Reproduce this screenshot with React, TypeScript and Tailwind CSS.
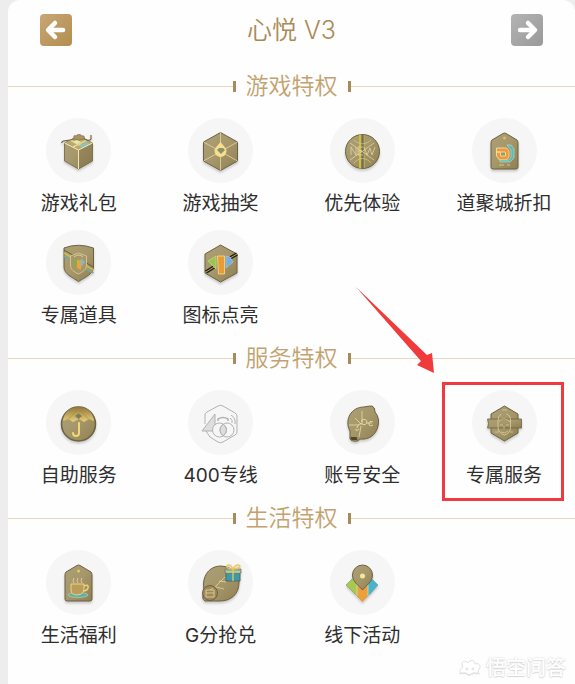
import type { ReactNode } from "react";

type Privilege = { label: string; icon: ReactNode; flat?: boolean; highlighted?: boolean };
type Section = { title: string; items: Privilege[] };

const EDGE = "#6d6140";
const LIGHT = "#f4e6ae";

const HEX = "M32.5 14.5 49.5 24v19L32.5 52.5 15.5 43V24z";

const GiftIcon = (
  <>
    <path d="M32.5 18 46.5 25v18L32.5 51 18.5 43V25z" fill="url(#bronze)" stroke={EDGE} strokeWidth=".8" />
    <path d="M32.5 18 46.5 25 32.5 32 18.5 25z" fill="#b7a877" />
    <path d="M32.5 32 46.5 25v18L32.5 51z" fill="#786a45" opacity=".35" />
    <path d="m24 22 14 7M41 22l-14 7" stroke="#f0d37f" strokeWidth="1.500" fill="none" />
    <path d="m33 28 7-4 4 2-7 4z" fill="#8cc3ba" />
    <path d="m27 24 4-2 4 2-4 2z" fill="#e6e7b5" />
    <path d="M32.5 32v19M18.5 25l14 7 14-7" stroke={LIGHT} fill="none" />
    <path d="M15.500 25c1-4 6-1 12-4M37 20c4 3 7 3 8 1v-4" fill="none" stroke="#75664a" strokeWidth="1.200" />
    <path d="M28 21c-1-4 1-4 2-3 1-2 5-2 6 0 2-1 3 1 2 3l-5 1z" fill="#a9945f" stroke="#75664a" strokeWidth=".6" />
  </>
);

const DrawIcon = (
  <>
    <path d={HEX} fill="url(#bronze)" stroke={EDGE} />
    <path d="M32.500 14.500v38M15.500 24l34 19M49.500 24l-34 19" stroke="#e6d6a4" strokeWidth=".8" />
    <path d="M32.500 23c1 4 6 6 6 10a6 6 0 0 1-12 0c0-4 5-6 6-10z" fill="#f7e08c" />
    <path d="m29 32 2-2h4l2 2-4 4z" fill="#8d9068" />
  </>
);

const EarlyIcon = (
  <>
    <circle cx="32.500" cy="33.500" r="17" fill="url(#bronze)" stroke={EDGE} />
    <path d="M30 16.500v34" stroke="#d3bd31" strokeWidth="2" />
    <path d="M32.500 16.500v34" stroke="#706d62" strokeWidth="2" />
    <path d="M34.500 17v33" stroke="#b9a849" />
    <path d="M21 37v-8l5 8v-8M33 29h-5v8h5M28 33h4M34 29l3 8 3-7 2 7 3-8M20 25l24 17M20 42l24-17" stroke="#eadcae" strokeWidth=".7" fill="none" />
    <path d="M24 22c5 5 12 5 17 0M24 45c5-6 12-6 17 0" stroke="#d8c891" strokeWidth=".7" fill="none" />
  </>
);

const TAG = "M31 15.500q1.500-1 3 0L45 22q1 1 1 3v24q0 2-2 2H21q-2 0-2-2V25q0-2 1-3z";

const DiscountIcon = (
  <>
    <path d={TAG} fill="url(#bronze)" stroke={EDGE} />
    <circle cx="32.500" cy="20" r="1.500" fill="#d9bd68" />
    <path d="M24.500 30h10l2.500 3v6l-2.500 3h-7l-3-4V34h4v4h5v-4h-9z" fill="#ef9a3a" stroke={LIGHT} strokeWidth=".8" />
    <path d="M35 27h4l3 4v9l-4 4H28v-2h9l2-3v-7z" fill="#59b9bd" stroke="#cbe1bf" strokeWidth=".6" />
    <path d="M27 47h5m3 0h3" stroke="#d7c486" />
  </>
);

const ItemsIcon = (
  <>
    <path d="M18 18q14-5.500 29.500 0v19c0 7-8 10-15 14.500C26 47 18 44 18 37z" fill="url(#bronze)" stroke={EDGE} />
    <path d="m18 23 29.500 17" stroke="#d2b844" strokeWidth="2" />
    <path d="m18 26 29.500 17" stroke="#80a69c" strokeWidth="2" />
    <path d="m18 20 29.500 17" stroke="#655f4c" strokeWidth="1" />
    <path d="m32.500 23 8 3v9c0 5-4 7-8 9-4-2-8-4-8-9v-9z" fill="#a99667" stroke="#e0ce95" strokeWidth=".8" />
    <path d="m26 32 5-4v9z" fill="#85ad50" />
    <path d="M31 30h4v10l-4-2z" fill="#e7a344" />
    <path d="m35 28 4 4-4 5z" fill="#83b8cf" />
    <path d="M28 27q5-4 9 0" stroke={LIGHT} fill="none" strokeWidth=".7" />
  </>
);

const LightUpIcon = (
  <>
    <path d="M32.500 15 49 24v19l-16.500 9L17 43V24z" fill="url(#bronze)" stroke={EDGE} />
    <path d="m18 42 8-5M42 28l7-4" stroke="#211f19" strokeWidth="3.500" />
    <path d="m18 42 8-5M42 28l7-4" stroke="#e5cb78" strokeWidth=".8" />
    <path d="m20 31 8-5v13z" fill="#9cc64b" stroke="#cddd93" strokeWidth=".6" />
    <path d="M29.500 26h7v18h-6z" fill="#e79c35" stroke="#f7dd92" strokeWidth=".8" />
    <path d="m38 26 4 1 3 5-7 6z" fill="#77aee0" stroke="#b8cfda" strokeWidth=".6" />
  </>
);

const SelfServiceIcon = (
  <>
    <circle cx="32.500" cy="34" r="17" fill="url(#bronze)" stroke={EDGE} strokeWidth="1.500" />
    <path d="M17 31c2-19 29-19 31 0l-5-2-5 3-5-3-6 3-5-3z" fill="url(#gold)" />
    <path d="m32.500 19-10 10M32.500 19l10 10" stroke="#a58b43" strokeWidth=".7" />
    <path d="m29 26 3.500-2.500L36 26l-3.500 3z" fill="#827b58" />
    <path d="M33 33v10q0 3-3 3t-3-3" stroke="#f0d77c" strokeWidth="2" fill="none" strokeLinecap="round" />
  </>
);

const HotlineIcon = (
  <g fill="none" stroke="#b2b2b2" strokeLinejoin="round">
    <path d="m17 34v-9q0-2 2-3l11-6q2.500-1.500 5 0l12 7q2 1 2 3v16q0 2-2 3l-12 7q-2.500 1.500-5 0l-8-5-4-6" />
    <path d="m14 41 13-17v17z" fill="#dedede" />
    <circle cx="31.500" cy="40" r="7" fill="#f6f6f6" />
    <circle cx="39" cy="40" r="7" />
    <path d="M35.200 34q-6.500 6 0 12 6.500-6 0-12z" fill="#dddddd" />
    <path d="M30 31v-2q5-3 10 0v2" strokeWidth="1.500" />
    <path d="M42 28q3 2 2 5M43 25q5 3 4 9" />
  </g>
);

const SecurityIcon = (
  <>
    <path d="M34 17q4-1 8-1 3 1 3 6 5 6 3 14c-2 9-9 14-18 13-1 3-8 3-10 0v-8c-6-11 1-24 14-24z" fill="url(#bronze)" stroke={EDGE} />
    <path d="M20.500 47h6l1 3h-6z" fill="#514729" />
    <path d="M32 21v11M31 36l-2 11M19 35h10M36 33h6M25 28l6 6" stroke={LIGHT} strokeWidth=".7" />
    <path d="M27 38q1-5 5-4v-4q4-2 5 2-1 4-5 2m-6 5q-1 3 3 0M43 32q-4-2-4 2 0 3 4 1" stroke={LIGHT} strokeWidth=".8" fill="none" />
  </>
);

const ExclusiveIcon = (
  <>
    <path d="M32.500 16 46 24v19l-13.500 8L19 43V24z" fill="url(#bronze)" stroke={EDGE} />
    <path d="M15.500 29h34v9h-34l1-4.500z" fill="url(#bronze)" stroke={EDGE} strokeWidth=".8" />
    <path d="M29 24q-3 2-3 7v6q0 6 6.500 8 6-2 6-8v-6q0-6-4-7" stroke="#dfd29b" fill="none" strokeWidth=".8" />
    <path d="M27 31q5-5 11 1M28 35h3m3 0h3M32 36v3m-3 3q4 2 7-1M23 42h4m11 0h3M30 20h5" stroke="#dfd29b" fill="none" strokeWidth=".7" />
  </>
);

const LifeIcon = (
  <>
    <path d={TAG} fill="url(#bronze)" stroke={EDGE} />
    <circle cx="32.500" cy="21" r="1.500" fill="#e2c875" />
    <path d="M28 33q-2-2 0-5m4 5q-2-2 0-5m4 5q-2-2 0-5" stroke="#e2d8b5" strokeWidth=".8" fill="none" />
    <ellipse cx="32" cy="45" rx="10" ry="2.500" fill="#55b3b2" stroke="#d6d49f" strokeWidth=".6" />
    <path d="M25 34h13v7q-2 4-7 4-6 0-6-5z" fill="#b99e5b" stroke="#f1d27a" />
    <path d="M38 36q5-2 4 2-1 3-5 3" stroke="#f1d27a" strokeWidth="1.500" fill="none" />
  </>
);

const RedeemIcon = (
  <>
    <path d="M15.500 34C16 23 23 16 33 16q6 0 10 3l8 5v9c0 11-8 18-19 18H17q-4-2-1-9z" fill="url(#bronze)" stroke={EDGE} />
    <path d="m27 37 10-10M31 31l7 1m-10 5 8 2" stroke="#e5d39a" strokeWidth=".8" />
    <circle cx="22" cy="43" r="7.500" fill="#9c895b" stroke={EDGE} />
    <path d="M18 40h8v7h-8zM18 43h8M22 40l3-2" stroke="#ead5a0" fill="none" strokeWidth=".8" />
    <path d="M38 22h14v9H38z" fill="#3c9aad" stroke="#516a62" />
    <path d="M37 19h16v4H37z" fill="#79bac0" stroke="#80754d" strokeWidth=".7" />
    <path d="M45 19v12M38 22h14M45 19c-7 0-8-4-4-4 2 0 4 4 4 4s2-4 5-4c4 0 2 4-5 4z" stroke="#edc65c" strokeWidth="1.300" fill="none" />
  </>
);

const OfflineIcon = (
  <>
    <path d="m16 35 8-8 8 9v15z" fill="#a6c951" stroke="#90905c" strokeWidth=".6" />
    <path d="m40 27 8 8-8 9-8 7V36z" fill="#48b4cc" stroke="#70998f" strokeWidth=".6" />
    <path d="m27 35 5.500 5 5.500-5v11l-5.500 6-5.500-6z" fill="#eba03d" />
    <path d="M27 34v12M38 34v12" stroke="#d9ddb2" strokeWidth=".8" />
    <path d="M32.500 40c-4-5-10-8-10-15a10 10 0 0 1 20 0c0 7-6 10-10 15z" fill="url(#bronze)" stroke={EDGE} />
    <circle cx="32.500" cy="26" r="2.500" fill="#f7e796" />
  </>
);

const sections: Section[] = [
  {
    title: "游戏特权",
    items: [
      { label: "游戏礼包", icon: GiftIcon },
      { label: "游戏抽奖", icon: DrawIcon },
      { label: "优先体验", icon: EarlyIcon },
      { label: "道聚城折扣", icon: DiscountIcon },
      { label: "专属道具", icon: ItemsIcon },
      { label: "图标点亮", icon: LightUpIcon },
    ],
  },
  {
    title: "服务特权",
    items: [
      { label: "自助服务", icon: SelfServiceIcon },
      { label: "400专线", icon: HotlineIcon, flat: true },
      { label: "账号安全", icon: SecurityIcon },
      { label: "专属服务", icon: ExclusiveIcon, highlighted: true },
    ],
  },
  {
    title: "生活特权",
    items: [
      { label: "生活福利", icon: LifeIcon },
      { label: "G分抢兑", icon: RedeemIcon },
      { label: "线下活动", icon: OfflineIcon },
    ],
  },
];

function Gradients() {
  return (
    <svg className="absolute size-0" aria-hidden="true">
      <defs>
        <linearGradient id="bronze" x1="0" y1="0" x2="1" y2="1">
          <stop offset="0" stopColor="#aca075" />
          <stop offset=".5" stopColor="#a6976b" />
          <stop offset="1" stopColor="#8f7f52" />
        </linearGradient>
        <linearGradient id="gold" x1="0" y1="0" x2="0" y2="1">
          <stop offset="0" stopColor="#8e7638" />
          <stop offset="1" stopColor="#ead17d" />
        </linearGradient>
      </defs>
    </svg>
  );
}

function ArrowButton({ direction }: { direction: "left" | "right" }) {
  const left = direction === "left";
  return (
    <button
      type="button"
      aria-label={left ? "上一级" : "下一级"}
      className={`flex size-8 items-center justify-center rounded bg-linear-to-br ${
        left ? "from-[#c8a675] to-[#b38e4e]" : "from-[#b4b4b4] to-[#999999]"
      }`}
    >
      <svg viewBox="0 0 32 32" className={left ? "size-8" : "size-8 rotate-180"} aria-hidden="true">
        <path d="M23 16H10M15 9l-7 7 7 7" fill="none" stroke="#fff" strokeWidth="4.500" strokeLinecap="round" strokeLinejoin="round" />
      </svg>
    </button>
  );
}

function SectionTitle({ title }: { title: string }) {
  return (
    <div className="flex h-[52px] items-center">
      <span className="h-px flex-1 bg-[#e9d8bb]" />
      <span className="h-[11px] w-[3px] bg-[#a98a5c]" />
      <h2 className="px-[10px] text-[23px] leading-8 font-[350] text-[#c2a26e]">{title}</h2>
      <span className="h-[11px] w-[3px] bg-[#a98a5c]" />
      <span className="h-px flex-1 bg-[#e9d8bb]" />
    </div>
  );
}

function PrivilegeCell({ label, icon, flat, highlighted }: Privilege) {
  return (
    <button type="button" className="relative flex flex-col items-center gap-[7px]">
      <span className="size-[65px] rounded-full bg-[#f6f6f6]">
        <svg
          viewBox="0 0 65 65"
          className={flat ? "size-full" : "size-full drop-shadow-[0_2px_1px_rgba(0,0,0,0.18)]"}
          aria-hidden="true"
        >
          {icon}
        </svg>
      </span>
      <span className="text-[19px] leading-7 whitespace-nowrap text-[#2e2e2e]">{label}</span>
      {highlighted && (
        <>
          <span className="absolute -top-2 right-[11px] -bottom-[11px] left-[9px] border-3 border-[#ef3b3f]" />
          <svg viewBox="0 0 78 86" className="absolute -top-[103px] -left-[77px] h-[86px] w-[78px]" aria-hidden="true">
            <path d="M0 0 71 68l5-2 2 20-17-8 4-4z" fill="#f03a3c" />
          </svg>
        </>
      )}
    </button>
  );
}

function Watermark() {
  return (
    <footer className="flex h-8 items-center justify-end gap-1 pr-[9px]">
      <svg viewBox="0 0 24 20" className="h-5 w-6" fill="#fff" stroke="#e0e0e0" aria-hidden="true">
        <path d="M5 9c-3-5 2-8 5-4 2-4 7-3 7 1 5-2 7 4 3 6 2 4-2 5-4 3-3 3-6 3-9 0-4 3-8-3-2-6z" />
        <path d="M1 16q6-3 10 1 5-4 11-1" fill="none" />
        <circle cx="9" cy="11" r="1" />
        <circle cx="15" cy="11" r="1" />
      </svg>
      <span className="text-xl leading-7 font-medium text-white [text-shadow:0_0_2px_#cccccc,0_1px_1px_#e0e0e0]">悟空问答</span>
    </footer>
  );
}

export default function App() {
  return (
    <div className="min-h-screen bg-[#ededed] pl-2 font-['Inter','Noto_Sans_CJK_SC',sans-serif]">
      <Gradients />
      <main className="min-h-screen overflow-hidden rounded-t-xl bg-[#fefefe]">
        <header className="flex h-[60px] items-center justify-between px-8">
          <ArrowButton direction="left" />
          <h1 className="text-[25px] leading-9 font-[350] text-[#aa8a55]">心悦 V3</h1>
          <ArrowButton direction="right" />
        </header>
        {sections.map((section) => (
          <section key={section.title}>
            <SectionTitle title={section.title} />
            <div className="grid grid-cols-4 gap-y-3 pt-[6px] pb-[2px]">
              {section.items.map((item) => (
                <PrivilegeCell key={item.label} {...item} />
              ))}
            </div>
          </section>
        ))}
        <Watermark />
      </main>
    </div>
  );
}
